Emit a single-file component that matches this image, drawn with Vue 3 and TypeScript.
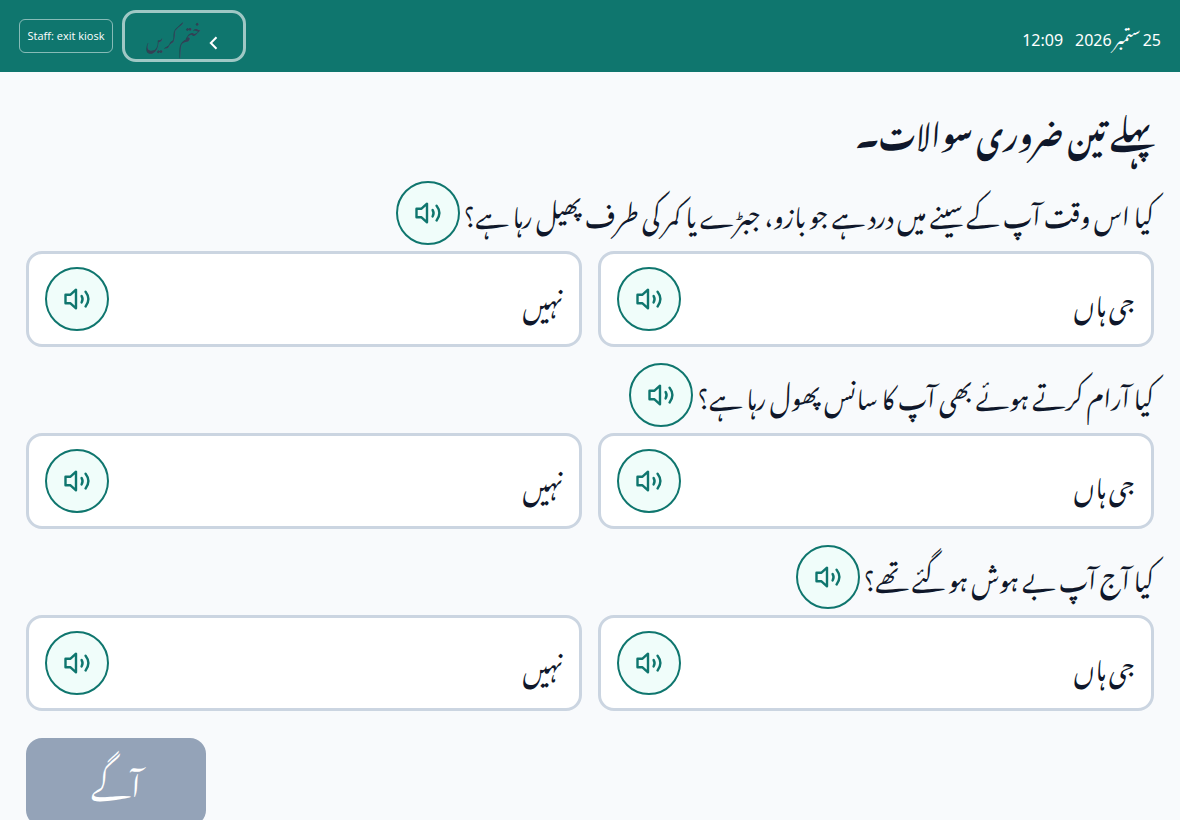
<script setup lang="ts">
import { reactive } from 'vue'

interface Question {
  id: string
  text: string
}

interface Answer {
  value: string
  label: string
}

const questions: Question[] = [
  { id: 'chest', text: 'کیا اس وقت آپ کے سینے میں درد ہے جو بازو، جبڑے یا کمر کی طرف پھیل رہا ہے؟' },
  { id: 'breath', text: 'کیا آرام کرتے ہوئے بھی آپ کا سانس پھول رہا ہے؟' },
  { id: 'faint', text: 'کیا آج آپ بے ہوش ہو گئے تھے؟' },
]

const answers: Answer[] = [
  { value: 'yes', label: 'جی ہاں' },
  { value: 'no', label: 'نہیں' },
]

const chosen = reactive<Record<string, string>>({})
</script>

<template>
  <div class="kiosk" dir="rtl" lang="ur">
    <header class="bar">
      <div class="clock">
        <span><span class="digits">25</span> ستمبر <span class="digits">2026</span></span>
        <time class="digits">12:09</time>
      </div>
      <div class="actions">
        <button type="button" class="finish">
          <svg class="chevron" viewBox="0 0 9 14" aria-hidden="true"><path d="M7.500 1.200 1.800 7l5.700 5.800" /></svg>
          <span>ختم کریں</span>
        </button>
        <button type="button" class="staff" dir="ltr" lang="en">Staff: exit kiosk</button>
      </div>
    </header>

    <main class="content">
      <h1>پہلے تین ضروری سوالات۔</h1>

      <section v-for="q in questions" :key="q.id" class="question">
        <div class="prompt">
          <h2 :id="q.id">{{ q.text }}</h2>
          <button type="button" class="listen" aria-label="سنیں">
            <svg viewBox="0 0 28 28" aria-hidden="true">
              <path d="M2.500 9.700h5L13 4.700v18.600l-5.500-5h-5z" />
              <path d="M18.600 11q2 3.200 0 6.400" />
              <path d="M22.600 6.800q5.600 7.300 0 14.600" />
            </svg>
          </button>
        </div>
        <div class="answers" role="group" :aria-labelledby="q.id">
          <div v-for="a in answers" :key="a.value" class="card" :class="{ selected: chosen[q.id] === a.value }">
            <button type="button" class="answer" @click="chosen[q.id] = a.value">{{ a.label }}</button>
            <button type="button" class="listen" aria-label="سنیں">
              <svg viewBox="0 0 28 28" aria-hidden="true">
                <path d="M2.500 9.700h5L13 4.700v18.600l-5.500-5h-5z" />
                <path d="M18.600 11q2 3.200 0 6.400" />
                <path d="M22.600 6.800q5.600 7.300 0 14.600" />
              </svg>
            </button>
          </div>
        </div>
      </section>

      <div class="footer">
        <button type="button" class="next" :disabled="Object.keys(chosen).length < questions.length">آگے</button>
      </div>
    </main>
  </div>
</template>

<style>
body {
  margin: 0;
  background: #f8fafc;
}
</style>

<style scoped>
.kiosk {
  min-height: 100vh;
  background: #f8fafc;
  color: #0f172a;
  font-family: 'Noto Nastaliq Urdu', 'Urdu Typesetting', 'Noto Sans', 'DejaVu Sans', sans-serif;
}
* {
  box-sizing: border-box;
}
button {
  font-family: inherit;
  color: inherit;
  cursor: pointer;
}
.bar {
  display: flex;
  align-items: center;
  justify-content: space-between;
  min-height: 72px;
  padding: 10px 19px;
  background: #0f766e;
  color: #fff;
}
.clock {
  display: flex;
  align-items: baseline;
  gap: 12px;
  padding-top: 4px;
  font-size: 16px;
  line-height: 24px;
}
.digits {
  font-family: 'Noto Sans', sans-serif;
}
.actions {
  display: flex;
  align-items: center;
  gap: 9px;
}
.finish {
  display: flex;
  align-items: center;
  justify-content: center;
  gap: 8px;
  width: 124px;
  height: 52px;
  padding: 2px 4px 0 0;
  border: 3px solid rgba(255, 255, 255, 0.6);
  border-radius: 14px;
  background: transparent;
  color: #334155;
  font-size: 17px;
  line-height: 24px;
}
.chevron {
  width: 9px;
  height: 14px;
  margin-top: 12px;
  fill: none;
  stroke: #fff;
  stroke-width: 2;
}
.staff {
  width: 94px;
  height: 34px;
  padding: 0 0 2px;
  border: 1px solid rgba(255, 255, 255, 0.5);
  border-radius: 6px;
  background: transparent;
  color: #fff;
  font-family: 'Open Sans', 'Noto Sans', sans-serif;
  font-size: 11px;
  white-space: nowrap;
}
.content {
  padding: 27px 26px 26px;
}
h1 {
  margin: 0 0 18px;
  font-size: 30px;
  line-height: 64px;
  font-weight: 700;
}
.question {
  margin-bottom: 16px;
}
.prompt {
  display: flex;
  align-items: center;
  gap: 4px;
  margin-bottom: 6px;
}
h2 {
  margin: 0;
  padding-bottom: 2px;
  font-size: 25px;
  line-height: 48px;
  font-weight: 400;
}
.listen {
  display: grid;
  place-items: center;
  flex: none;
  width: 64px;
  height: 64px;
  padding: 0;
  border: 2px solid #0f766e;
  border-radius: 50%;
  background: #f0fdfa;
  color: #0f766e;
}
.listen svg {
  width: 28px;
  height: 28px;
  fill: none;
  stroke: currentColor;
  stroke-width: 2.4;
  stroke-linecap: round;
  stroke-linejoin: round;
}
.answers {
  display: grid;
  grid-template-columns: 1fr 1fr;
  gap: 16px;
}
.card {
  display: flex;
  align-items: center;
  min-height: 96px;
  padding: 0 16px;
  border: 3px solid #cbd5e1;
  border-radius: 16px;
  background: #fff;
}
.card.selected {
  border-color: #0f766e;
}
.answer {
  flex: 1;
  align-self: stretch;
  padding: 4px 0 0;
  border: 0;
  background: transparent;
  font-size: 25px;
  line-height: 48px;
  text-align: right;
}
.footer {
  display: flex;
  justify-content: flex-end;
  padding-top: 11px;
}
.next {
  width: 180px;
  height: 88px;
  padding: 0 0 2px;
  border: 0;
  border-radius: 16px;
  background: #0f766e;
  color: #fff;
  font-size: 30px;
  line-height: 64px;
}
.next:disabled {
  background: #94a3b8;
  cursor: default;
}
</style>
